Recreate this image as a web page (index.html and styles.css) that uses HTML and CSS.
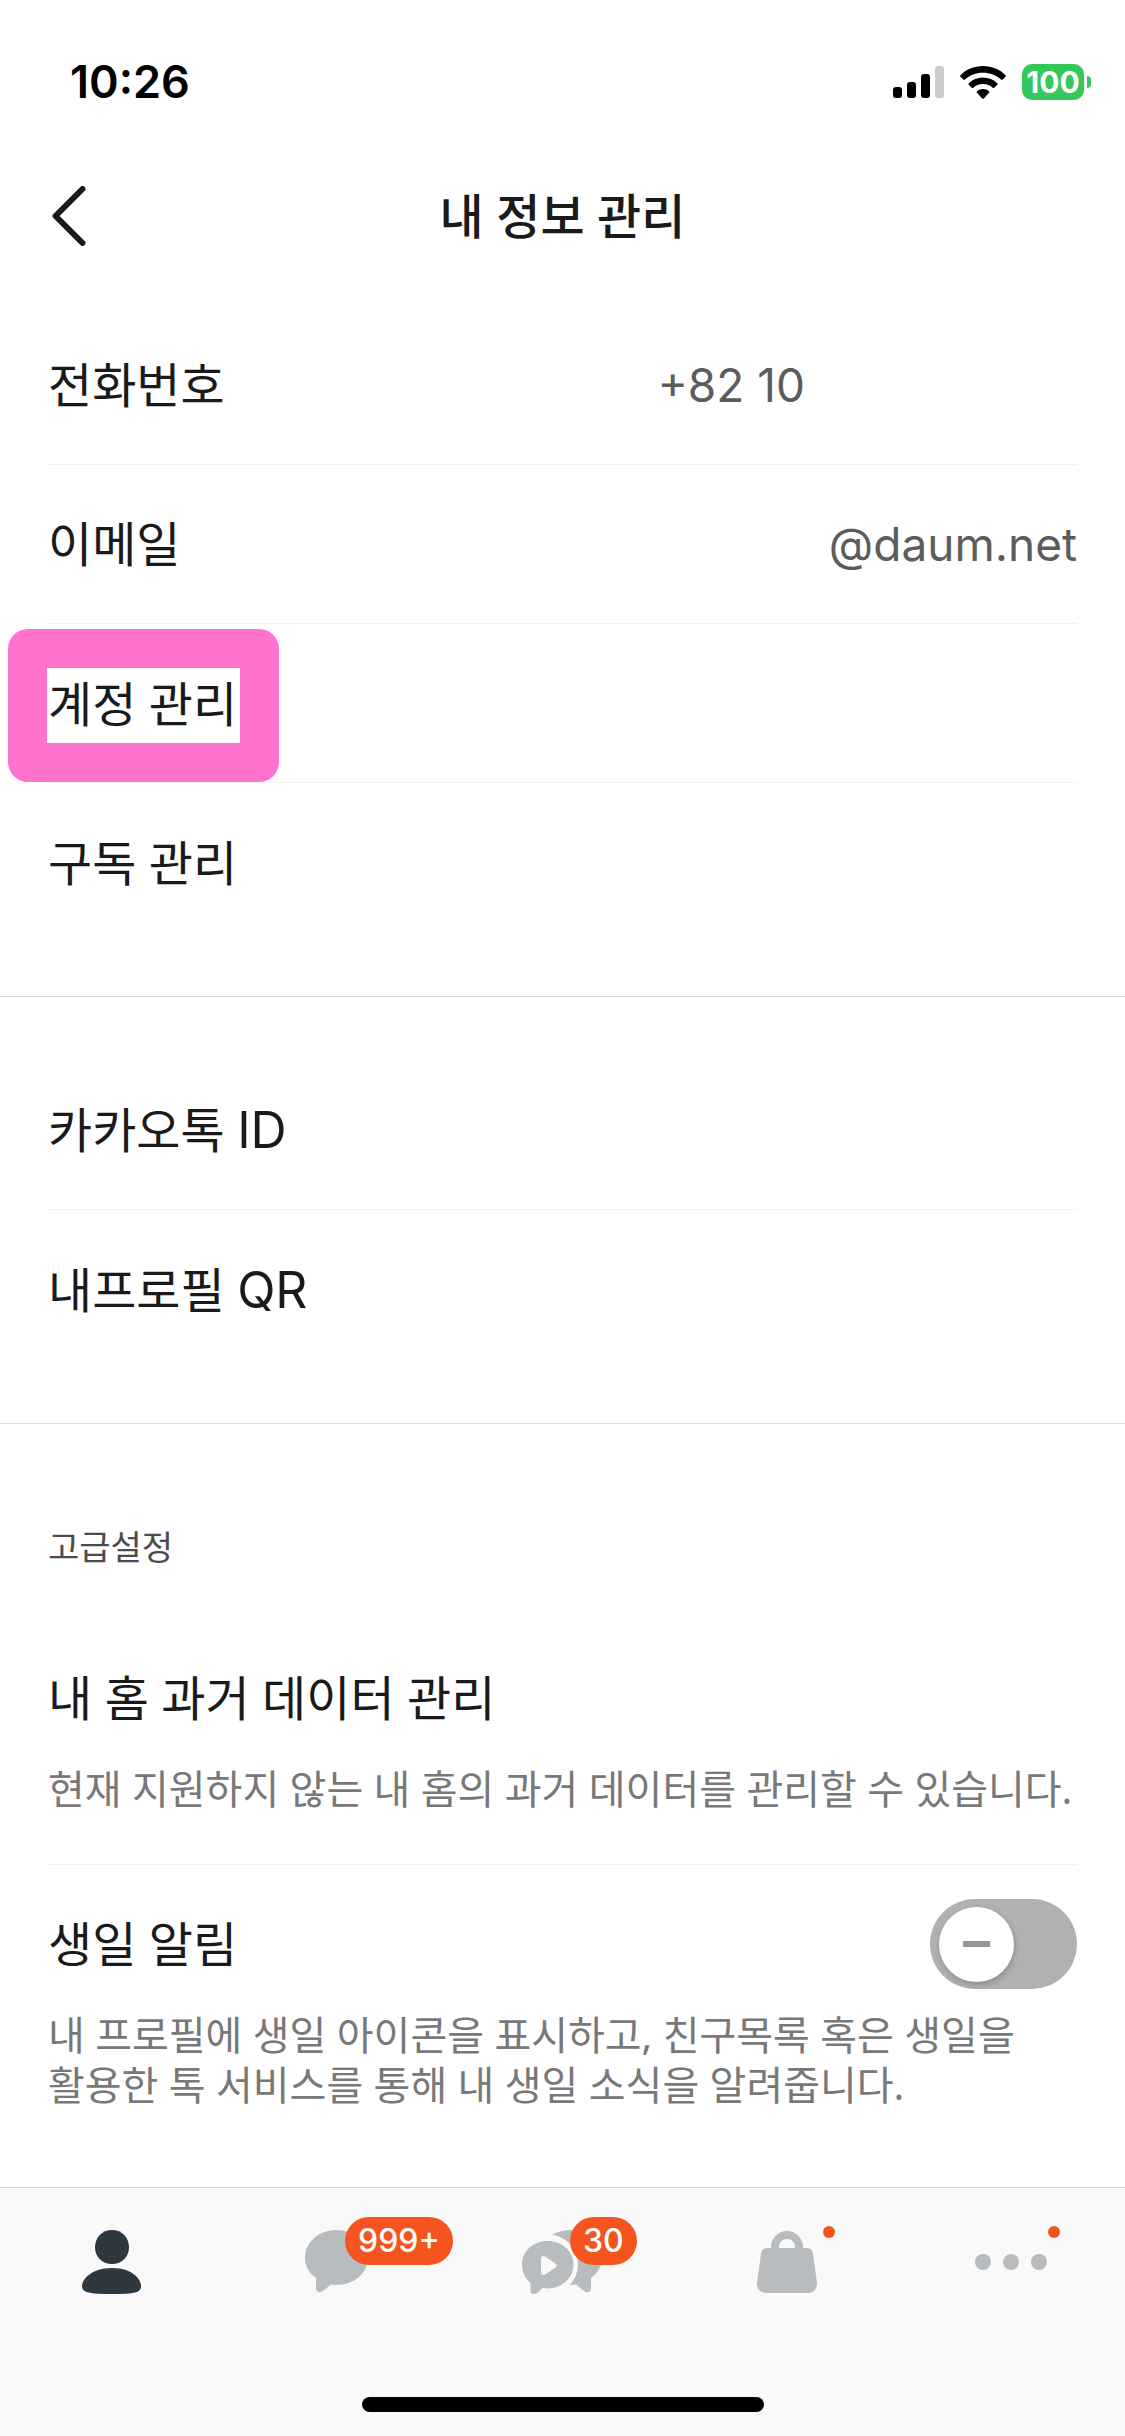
FILE: index.html
```html
<!DOCTYPE html>
<html lang="ko">
<head>
<meta charset="utf-8">
<meta name="viewport" content="width=device-width, initial-scale=1">
<title>내 정보 관리</title>
<link rel="stylesheet" href="styles.css">
</head>
<body>
<div class="app">
  <div class="status-bar">
    <time class="clock">10:26</time>
    <div class="status-icons">
      <svg class="signal" width="51" height="32" viewBox="0 0 51 32" aria-hidden="true">
        <rect x="0" y="21" width="9" height="11" rx="3"/>
        <rect x="14" y="16" width="9" height="16" rx="3"/>
        <rect x="28" y="8" width="9" height="24" rx="3"/>
        <rect x="42" y="0" width="9" height="32" rx="3" fill="#ccc"/>
      </svg>
      <svg class="wifi" width="46" height="33" viewBox="0 0 46 33" aria-hidden="true">
        <path d="M23 0C14 0 6 3.500 .5 9.200q-.8.800 0 1.600L3.300 13.600q.8.800 1.600 0C9.600 9.300 16 6.700 23 6.700s13.400 2.600 18.100 6.900q.8.800 1.600 0L45.500 10.800q.8-.8 0-1.600C40 3.500 32 0 23 0Z"/>
        <path d="M23 11.500c-5.600 0-10.600 2.200-14.200 5.700q-.8.800 0 1.600l2.900 2.900q.8.800 1.600 0c2.500-2.300 5.900-3.600 9.700-3.600s7.200 1.300 9.700 3.600q.8.800 1.600 0l2.900-2.900q.8-.8 0-1.600C33.600 13.700 28.600 11.500 23 11.500Z"/>
        <path d="M23 23c-2.300 0-4.400.8-6 2.200q-.8.700 0 1.500l5.200 5.700q.8.800 1.600 0l5.200-5.700q.8-.8 0-1.500C27.400 23.800 25.300 23 23 23Z"/>
      </svg>
      <div class="battery"><span class="battery-level">100</span><span class="battery-tip"></span></div>
    </div>
  </div>

  <header class="header">
    <button class="back" type="button" aria-label="뒤로">
      <svg width="34" height="60" viewBox="0 0 34 60" aria-hidden="true"><path d="M30.500 3L3.500 30l27 27"/></svg>
    </button>
    <h1 class="title">내 정보 관리</h1>
  </header>

  <main class="content">
    <section class="group">
      <a class="row" href="#phone"><span class="label">전화번호</span><span class="value value-masked">+82 10</span></a>
      <a class="row" href="#email"><span class="label">이메일</span><span class="value">@daum.net</span></a>
      <a class="row row-marked" href="#account"><span class="label label-marked">계정 관리</span></a>
      <a class="row" href="#subscription"><span class="label">구독 관리</span></a>
    </section>

    <section class="group">
      <a class="row" href="#id"><span class="label">카카오톡 <span class="latin">ID</span></span></a>
      <a class="row" href="#qr"><span class="label">내프로필 <span class="latin">QR</span></span></a>
    </section>

    <section class="group advanced">
      <h2 class="group-title">고급설정</h2>
      <a class="item" href="#home-data">
        <span class="label">내 홈 과거 데이터 관리</span>
        <span class="description">현재 지원하지 않는 내 홈의 과거 데이터를 관리할 수 있습니다.</span>
      </a>
      <div class="item item-switch">
        <div class="switch-row">
          <label class="label" for="birthday">생일 알림</label>
          <input class="switch" id="birthday" type="checkbox" role="switch" aria-describedby="birthday-text">
        </div>
        <p class="description" id="birthday-text">내 프로필에 생일 아이콘을 표시하고, 친구목록 혹은 생일을<br>활용한 톡 서비스를 통해 내 생일 소식을 알려줍니다.</p>
      </div>
    </section>
  </main>

  <footer class="bottom">
    <nav class="tabs">
      <a class="tab tab-active" href="#friends" aria-label="친구">
        <svg width="121" height="96" viewBox="0 0 121 96" aria-hidden="true">
          <path d="M60 16C70 16 77 23.500 77 33.500C77 42.500 70 50 60 50S43 42.500 43 33.500C43 23.500 50 16 60 16Z"/>
          <path d="M60 54C80 54 89 65 89 72C89 78.500 83 80 60 80S30 78.500 30 72C30 65 40 54 60 54Z"/>
        </svg>
      </a>
      <a class="tab" href="#chats" aria-label="채팅">
        <svg width="121" height="96" viewBox="0 0 121 96" aria-hidden="true">
          <path d="M59.500 16C77 16 91 28 91 43.500S77 71 59.500 71Q57 71 54 70.600L46 77C43 79.500 39 78 39 74.500V64C32 59 28 52 28 43.500C28 28 42 16 59.500 16Z"/>
        </svg>
        <span class="badge">999+</span>
      </a>
      <a class="tab" href="#open" aria-label="오픈채팅">
        <svg width="121" height="96" viewBox="0 0 121 96" aria-hidden="true">
          <path transform="translate(128 0) scale(-1 1)" d="M59.500 16C77 16 91 28 91 43.500S77 71 59.500 71Q57 71 54 70.600L46 77C43 79.500 39 78 39 74.500V64C32 59 28 52 28 43.500C28 28 42 16 59.500 16Z"/>
          <circle class="cutout" cx="46" cy="50.500" r="30"/>
          <path d="M45.500 27C60 27 71.500 37 71.500 50.500S60 74.500 45.500 74.500L41 74L35 79C32 81 28.500 80 28.500 76.500V69C23.500 65 20 58 20 51C20 37 31 27 45.500 27Z"/>
          <path class="cutout" d="M39 45C39 42 41.500 41.300 43.500 42.700L53.500 49.500Q56 51.500 53.500 53.500L43.500 60.300C41.500 61.700 39 61 39 58Z"/>
        </svg>
        <span class="badge">30</span>
      </a>
      <a class="tab" href="#shopping" aria-label="쇼핑">
        <svg width="121" height="96" viewBox="0 0 121 96" aria-hidden="true">
          <path class="handle" d="M48 36V33a12 12 0 0 1 24 0V36"/>
          <path d="M40.500 34H79.500Q85.500 34 86 40L90 68.500C90.500 75 86.500 79 80.500 79H39.500C33.500 79 29.500 75 30 68.500L34 40Q34.500 34 40.500 34Z"/>
        </svg>
        <span class="dot"></span>
      </a>
      <a class="tab" href="#more" aria-label="더보기">
        <svg width="121" height="96" viewBox="0 0 121 96" aria-hidden="true">
          <circle cx="31" cy="48" r="8"/><circle cx="59" cy="48" r="8"/><circle cx="87" cy="48" r="8"/>
        </svg>
        <span class="dot"></span>
      </a>
    </nav>
    <div class="home-indicator"></div>
  </footer>
</div>
</body>
</html>
```

FILE: styles.css
```css
* {
  box-sizing: border-box;
}

body {
  margin: 0;
  background: #fff;
  color: #1a1a1a;
  font-family: "Noto Sans", "Noto Sans CJK KR", sans-serif;
}

a {
  color: inherit;
  text-decoration: none;
}

svg {
  display: block;
}

.app {
  display: flex;
  flex-direction: column;
  min-height: 100vh;
}

/* Status bar */
.status-bar {
  display: flex;
  align-items: center;
  justify-content: space-between;
  padding: 58px 34px 0 70px;
}

.clock {
  color: #000;
  font: 600 45px/48px Inter, sans-serif;
}

.status-icons {
  display: flex;
  align-items: center;
  gap: 16px;
}

.battery {
  display: flex;
  align-items: center;
  gap: 3px;
}

.battery-level {
  width: 62px;
  border-radius: 10px;
  background: #34c759;
  color: #fff;
  font: 700 30px/36px Inter, sans-serif;
  text-align: center;
}

.battery-tip {
  width: 4px;
  height: 12px;
  border-radius: 0 4px 4px 0;
  background: #34c759;
}

/* Header */
.header {
  display: grid;
  grid-template-columns: 100px 1fr 100px;
  align-items: center;
  padding: 60px 0 40px;
}

.back {
  display: flex;
  align-items: center;
  height: 100px;
  padding: 0 0 0 52px;
  border: 0;
  background: none;
}

.back path {
  fill: none;
  stroke: #1a1a1a;
  stroke-width: 6;
  stroke-linecap: round;
  stroke-linejoin: round;
}

.title {
  margin: 0;
  font-size: 48px;
  font-weight: 500;
  line-height: 72px;
  text-align: center;
}

/* Settings groups */
.group {
  padding: 54px 48px;
  border-bottom: 1px solid #dedede;
}

.group:first-child {
  padding-top: 0;
}

.row {
  display: flex;
  align-items: center;
  justify-content: space-between;
  height: 159px;
  border-bottom: 1px solid #f2f2f2;
}

.row:last-child {
  border-bottom: 0;
}

.label {
  font-size: 48px;
  line-height: 72px;
}

.latin {
  font-family: Inter, sans-serif;
  font-size: 50px;
}

.value {
  color: #5c5c5c;
  font: 400 46px/72px Inter, sans-serif;
}

.value-masked {
  margin-right: 272px;
}

.row-marked {
  align-items: flex-end;
}

.label-marked {
  margin-left: -40px;
  padding: 0 3px 3px 1px;
  border: 39px solid #ff73cf;
  border-radius: 20px;
  background: #fff;
}

.advanced {
  padding-top: 99px;
  border-bottom: 0;
}

.group-title {
  margin: 0 0 91px;
  color: #4b4b4b;
  font-size: 34px;
  font-weight: 400;
  line-height: 48px;
}

.item {
  display: flex;
  flex-direction: column;
  gap: 30px;
  padding-bottom: 50px;
  border-bottom: 1px solid #f2f2f2;
}

.item-switch {
  gap: 21px;
  padding: 34px 0 0;
  border-bottom: 0;
}

.description {
  margin: 0;
  color: #787878;
  font-size: 40px;
  line-height: 50px;
}

.switch-row {
  display: flex;
  align-items: center;
  justify-content: space-between;
}

.switch {
  display: flex;
  align-items: center;
  width: 147px;
  height: 90px;
  margin: 0;
  padding: 0 9px;
  border-radius: 45px;
  background: #b1b1b1;
  appearance: none;
}

.switch::before {
  content: "";
  width: 75px;
  height: 75px;
  border-radius: 50%;
  background: linear-gradient(#979797, #979797) center / 27px 6px no-repeat #fff;
  box-shadow: 1px 3px 6px rgba(0, 0, 0, 0.2);
}

.switch:checked {
  justify-content: flex-end;
}

/* Bottom navigation */
.bottom {
  margin-top: auto;
  padding: 26px 0 24px;
  border-top: 1px solid #d5d5d5;
  background: #f9f9f9;
}

.tabs {
  display: grid;
  grid-template-columns: repeat(5, 1fr);
  justify-items: center;
}

.tab {
  position: relative;
  fill: #b8bcbf;
}

.tab-active {
  fill: #2e3640;
}

.cutout {
  fill: #f9f9f9;
}

.handle {
  fill: none;
  stroke: #b8bcbf;
  stroke-width: 8;
}

.badge {
  position: absolute;
  top: 3px;
  left: 68px;
  padding: 0 13px;
  border-radius: 24px;
  background: #f5541e;
  color: #fff;
  font: 500 32px/48px Inter, sans-serif;
}

.dot {
  position: absolute;
  top: 12px;
  left: 96px;
  width: 12px;
  height: 12px;
  border-radius: 50%;
  background: #f5541e;
}

.home-indicator {
  width: 402px;
  height: 15px;
  margin: 87px auto 0;
  border-radius: 8px;
  background: #000;
}
```
